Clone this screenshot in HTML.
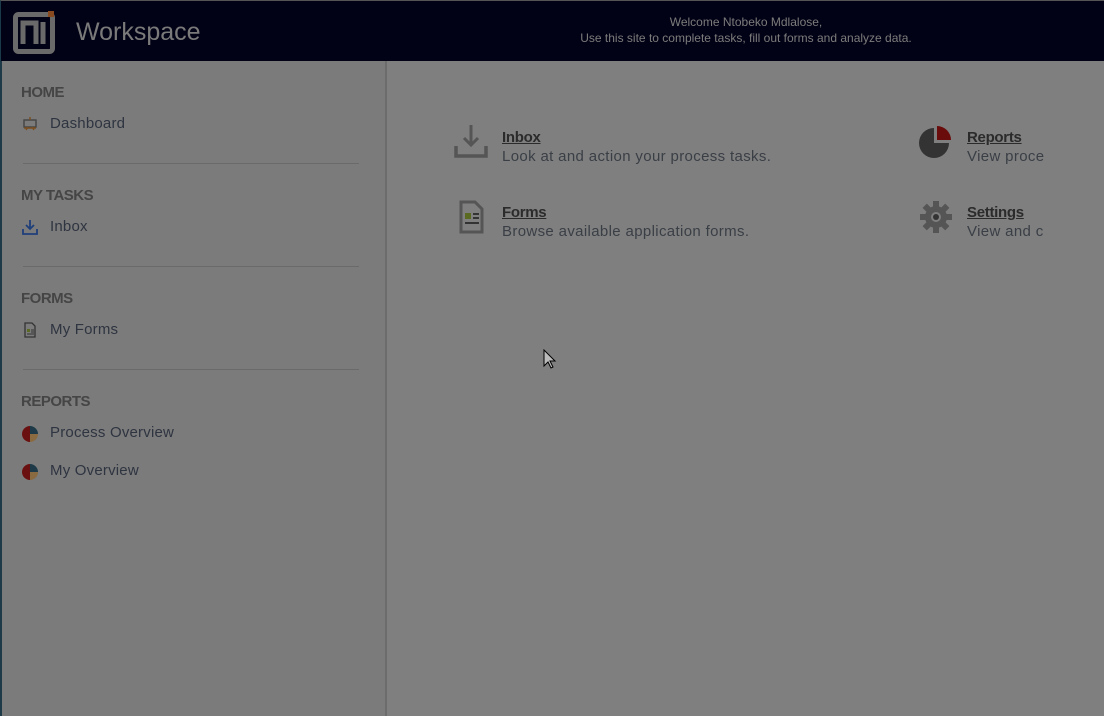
<!DOCTYPE html>
<html><head><meta charset="utf-8"><style>
*{margin:0;padding:0;box-sizing:border-box}
body{width:1104px;height:716px;overflow:hidden;background:#7f7f7f;font-family:"Liberation Sans",sans-serif;position:relative}
.hdr{position:absolute;left:0;top:0;width:1104px;height:61px;background:#020216;border-top:1px solid #555;border-left:1px solid #1a3a4a}
.title{position:absolute;left:75px;top:17px;color:#7a7a7a;font-size:25px}
.welcome{position:absolute;left:540px;width:410px;top:13px;text-align:center;color:#7c7c7c;font-size:12px;line-height:16px}
.side{position:absolute;left:0;top:61px;width:387px;height:655px;background:#7b7b7b;border-left:2px solid #1e3a48;border-right:2px solid #6c6c6c}
.sec{position:absolute;left:19px;font-size:15px;font-weight:bold;color:#454545;letter-spacing:-0.5px}
.item{position:absolute;left:48px;font-size:15px;color:#2e3440;letter-spacing:0.2px}
.ic{position:absolute;left:20px}
.hr{position:absolute;left:21px;width:336px;height:1px;background:#6a6a6a}
.card{position:absolute}
.card .t{font-size:15px;color:#2b2b2b;text-decoration:underline;font-weight:bold;letter-spacing:-0.3px}
.card .d{font-size:15px;color:#3a3f46;margin-top:2px;letter-spacing:0.35px}
</style></head><body>
<div class="hdr">
<svg style="position:absolute;left:12px;top:9px" width="44" height="44" viewBox="0 0 44 44"><rect x="2.5" y="4.5" width="37" height="37" rx="3" fill="none" stroke="#6a6a6a" stroke-width="5"/><path d="M10 34V13h13v21" fill="none" stroke="#6a6a6a" stroke-width="5"/><path d="M30 12v22" stroke="#6a6a6a" stroke-width="5"/><rect x="35" y="1" width="6" height="6" fill="#8a4a20"/></svg>
<div class="title">Workspace</div>
<div class="welcome">Welcome Ntobeko Mdlalose,<br>Use this site to complete tasks, fill out forms and analyze data.</div>
</div>
<div class="side">
<div class="sec" style="top:23px">HOME</div>
<svg class="ic" style="top:55px" width="16" height="16" viewBox="0 0 16 16"><rect x="2" y="4" width="12" height="7" fill="none" stroke="#444" stroke-width="1.4"/><path d="M8 1v3M4 14l2-3M12 14l-2-3M2 12h12" stroke="#7a4e20" stroke-width="1.4"/></svg>
<div class="item" style="top:54px">Dashboard</div>
<div class="hr" style="top:102px"></div>
<div class="sec" style="top:126px">MY TASKS</div>
<svg class="ic" style="top:158px" width="16" height="16" viewBox="0 0 16 16"><path d="M8 1v9M4 6l4 4 4-4M1 10v5h14v-5" fill="none" stroke="#1f3f7a" stroke-width="1.8"/></svg>
<div class="item" style="top:157px">Inbox</div>
<div class="hr" style="top:205px"></div>
<div class="sec" style="top:229px">FORMS</div>
<svg class="ic" style="top:261px" width="16" height="16" viewBox="0 0 16 16"><path d="M3 1h7l3 3v11H3z" fill="none" stroke="#333" stroke-width="1.3"/><rect x="5" y="7" width="3" height="3" fill="#5a6a20"/><path d="M9 8h3M9 10h3M5 12h7" stroke="#333"/></svg>
<div class="item" style="top:260px">My Forms</div>
<div class="hr" style="top:308px"></div>
<div class="sec" style="top:332px">REPORTS</div>
<svg class="ic" style="top:365px" width="16" height="16" viewBox="0 0 16 16"><path d="M8 8V0A8 8 0 0 0 8 16z" fill="#6a1010"/><path d="M8 8V0A8 8 0 0 1 16 8z" fill="#1e3a48"/><path d="M8 8h8A8 8 0 0 1 8 16z" fill="#8a6a40"/></svg>
<div class="item" style="top:363px">Process Overview</div>
<svg class="ic" style="top:403px" width="16" height="16" viewBox="0 0 16 16"><path d="M8 8V0A8 8 0 0 0 8 16z" fill="#6a1010"/><path d="M8 8V0A8 8 0 0 1 16 8z" fill="#1e3a48"/><path d="M8 8h8A8 8 0 0 1 8 16z" fill="#8a6a40"/></svg>
<div class="item" style="top:401px">My Overview</div>
</div>
<svg style="position:absolute;left:454px;top:125px" width="34" height="34" viewBox="0 0 34 34"><path d="M17 0v20M10 13l7 7 7-7" fill="none" stroke="#555" stroke-width="3"/><path d="M2 21v10h30V21" fill="none" stroke="#555" stroke-width="3.5"/></svg>
<div class="card" style="left:502px;top:129px"><div class="t">Inbox</div><div class="d">Look at and action your process tasks.</div></div>
<svg style="position:absolute;left:456px;top:200px" width="30" height="34" viewBox="0 0 30 34"><path d="M5 2h14l7 7v23H5z" fill="none" stroke="#555" stroke-width="3"/><rect x="9" y="13" width="6" height="6" fill="#5a6a20"/><path d="M17 14h6M17 18h6M9 23h14" stroke="#333" stroke-width="2"/></svg>
<div class="card" style="left:502px;top:204px"><div class="t">Forms</div><div class="d">Browse available application forms.</div></div>
<svg style="position:absolute;left:918px;top:126px" width="34" height="34" viewBox="0 0 34 34"><path d="M16 2A15 15 0 1 0 31 17H16z" fill="#333"/><path d="M19 0A14 14 0 0 1 33 14H19z" fill="#6a0c0c"/></svg>
<div class="card" style="left:967px;top:129px;width:77px;overflow:hidden;white-space:nowrap"><div class="t">Reports</div><div class="d">View process</div></div>
<svg style="position:absolute;left:919px;top:200px" width="34" height="34" viewBox="0 0 34 34"><g fill="#555"><circle cx="17" cy="17" r="11"/><g stroke="#555" stroke-width="6"><path d="M17 1v32M1 17h32M5.7 5.7l22.6 22.6M28.3 5.7L5.7 28.3"/></g></g><circle cx="17" cy="17" r="5" fill="#7f7f7f"/><circle cx="17" cy="17" r="3" fill="#333"/></svg>
<div class="card" style="left:967px;top:204px;width:77px;overflow:hidden;white-space:nowrap"><div class="t">Settings</div><div class="d">View and change</div></div>
<svg style="position:absolute;left:543px;top:349px" width="14" height="21" viewBox="0 0 14 21"><path d="M1 1v16l4-4 3 6 2-1-3-6h5z" fill="#bbb" stroke="#000" stroke-width="1"/></svg>
</body></html>
